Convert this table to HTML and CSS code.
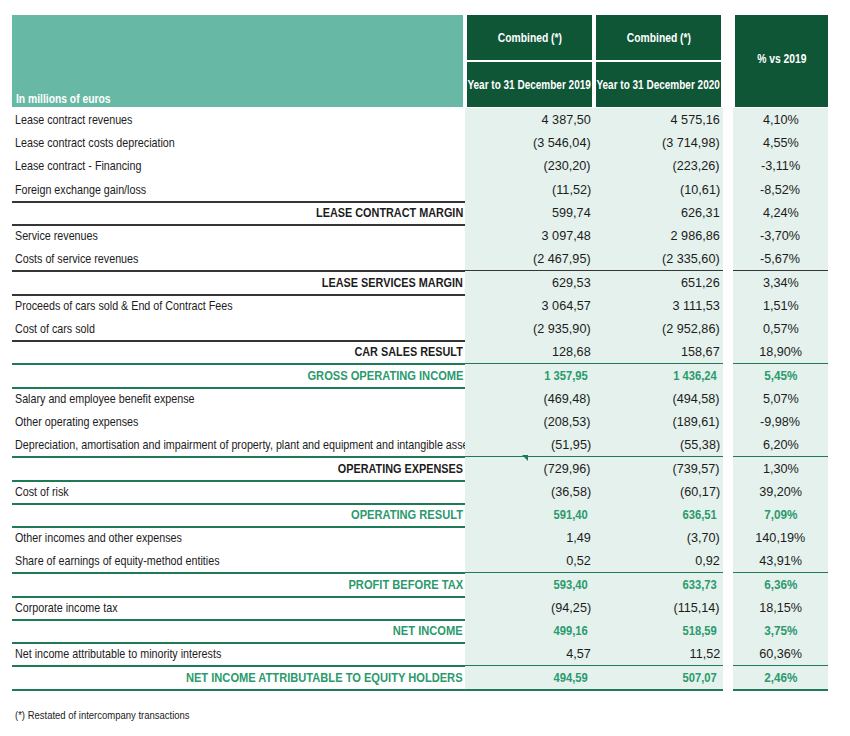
FILE: index.html
```html
<!DOCTYPE html>
<html>
<head>
<meta charset="utf-8">
<link rel="stylesheet" href="styles.css">
</head>
<body>
<div class="page">
  <div class="head">
    <div class="h-label"><span class="t">In millions of euros</span></div>
    <div class="h-cell h-top1"><span class="t">Combined (*)</span></div>
    <div class="h-cell h-top2"><span class="t">Combined (*)</span></div>
    <div class="h-pct"><span class="t">% vs 2019</span></div>
    <div class="h-cell h-bot1"><span class="t">Year to 31 December 2019</span></div>
    <div class="h-cell h-bot2"><span class="t">Year to 31 December 2020</span></div>
  </div>
  <div class="body">
    <div class="row"><div class="lab"><span class="t">Lease contract revenues</span></div><div class="n"><span class="t">4 387,50</span></div><div class="n"><span class="t">4 575,16</span></div><div class="gap"></div><div class="p"><span class="t">4,10%</span></div></div>
    <div class="row"><div class="lab"><span class="t">Lease contract costs depreciation</span></div><div class="n"><span class="t">(3 546,04)</span></div><div class="n"><span class="t">(3 714,98)</span></div><div class="gap"></div><div class="p"><span class="t">4,55%</span></div></div>
    <div class="row"><div class="lab"><span class="t">Lease contract - Financing</span></div><div class="n"><span class="t">(230,20)</span></div><div class="n"><span class="t">(223,26)</span></div><div class="gap"></div><div class="p"><span class="t">-3,11%</span></div></div>
    <div class="row dk"><div class="lab"><span class="t">Foreign exchange gain/loss</span></div><div class="n"><span class="t">(11,52)</span></div><div class="n"><span class="t">(10,61)</span></div><div class="gap"></div><div class="p"><span class="t">-8,52%</span></div></div>
    <div class="row dk sub"><div class="lab"><span class="t">LEASE CONTRACT MARGIN</span></div><div class="n"><span class="t">599,74</span></div><div class="n"><span class="t">626,31</span></div><div class="gap"></div><div class="p"><span class="t">4,24%</span></div></div>
    <div class="row"><div class="lab"><span class="t">Service revenues</span></div><div class="n"><span class="t">3 097,48</span></div><div class="n"><span class="t">2 986,86</span></div><div class="gap"></div><div class="p"><span class="t">-3,70%</span></div></div>
    <div class="row dk"><div class="lab"><span class="t">Costs of service revenues</span></div><div class="n"><span class="t">(2 467,95)</span></div><div class="n"><span class="t">(2 335,60)</span></div><div class="gap"></div><div class="p"><span class="t">-5,67%</span></div></div>
    <div class="row dk sub"><div class="lab"><span class="t">LEASE SERVICES MARGIN</span></div><div class="n"><span class="t">629,53</span></div><div class="n"><span class="t">651,26</span></div><div class="gap"></div><div class="p"><span class="t">3,34%</span></div></div>
    <div class="row"><div class="lab"><span class="t">Proceeds of cars sold &amp; End of Contract Fees</span></div><div class="n"><span class="t">3 064,57</span></div><div class="n"><span class="t">3 111,53</span></div><div class="gap"></div><div class="p"><span class="t">1,51%</span></div></div>
    <div class="row dk"><div class="lab"><span class="t">Cost of cars sold</span></div><div class="n"><span class="t">(2 935,90)</span></div><div class="n"><span class="t">(2 952,86)</span></div><div class="gap"></div><div class="p"><span class="t">0,57%</span></div></div>
    <div class="row gr sub"><div class="lab"><span class="t">CAR SALES RESULT</span></div><div class="n"><span class="t">128,68</span></div><div class="n"><span class="t">158,67</span></div><div class="gap"></div><div class="p"><span class="t">18,90%</span></div></div>
    <div class="row gr tot"><div class="lab"><span class="t">GROSS OPERATING INCOME</span></div><div class="n"><span class="t">1 357,95</span></div><div class="n"><span class="t">1 436,24</span></div><div class="gap"></div><div class="p"><span class="t">5,45%</span></div></div>
    <div class="row"><div class="lab"><span class="t">Salary and employee benefit expense</span></div><div class="n"><span class="t">(469,48)</span></div><div class="n"><span class="t">(494,58)</span></div><div class="gap"></div><div class="p"><span class="t">5,07%</span></div></div>
    <div class="row"><div class="lab"><span class="t">Other operating expenses</span></div><div class="n"><span class="t">(208,53)</span></div><div class="n"><span class="t">(189,61)</span></div><div class="gap"></div><div class="p"><span class="t">-9,98%</span></div></div>
    <div class="row gr"><div class="lab"><span class="t">Depreciation, amortisation and impairment of property, plant and equipment and intangible asse</span></div><div class="n"><span class="t">(51,95)</span></div><div class="n"><span class="t">(55,38)</span></div><div class="gap"></div><div class="p"><span class="t">6,20%</span></div></div>
    <div class="row gr sub"><div class="lab"><span class="t">OPERATING EXPENSES</span></div><div class="n"><span class="t">(729,96)</span><span class="tri"></span></div><div class="n"><span class="t">(739,57)</span></div><div class="gap"></div><div class="p"><span class="t">1,30%</span></div></div>
    <div class="row gr"><div class="lab"><span class="t">Cost of risk</span></div><div class="n"><span class="t">(36,58)</span></div><div class="n"><span class="t">(60,17)</span></div><div class="gap"></div><div class="p"><span class="t">39,20%</span></div></div>
    <div class="row gr tot"><div class="lab"><span class="t">OPERATING RESULT</span></div><div class="n"><span class="t">591,40</span></div><div class="n"><span class="t">636,51</span></div><div class="gap"></div><div class="p"><span class="t">7,09%</span></div></div>
    <div class="row"><div class="lab"><span class="t">Other incomes and other expenses</span></div><div class="n"><span class="t">1,49</span></div><div class="n"><span class="t">(3,70)</span></div><div class="gap"></div><div class="p"><span class="t">140,19%</span></div></div>
    <div class="row gr"><div class="lab"><span class="t">Share of earnings of equity-method entities</span></div><div class="n"><span class="t">0,52</span></div><div class="n"><span class="t">0,92</span></div><div class="gap"></div><div class="p"><span class="t">43,91%</span></div></div>
    <div class="row gr tot"><div class="lab"><span class="t">PROFIT BEFORE TAX</span></div><div class="n"><span class="t">593,40</span></div><div class="n"><span class="t">633,73</span></div><div class="gap"></div><div class="p"><span class="t">6,36%</span></div></div>
    <div class="row gr"><div class="lab"><span class="t">Corporate income tax</span></div><div class="n"><span class="t">(94,25)</span></div><div class="n"><span class="t">(115,14)</span></div><div class="gap"></div><div class="p"><span class="t">18,15%</span></div></div>
    <div class="row gr tot"><div class="lab"><span class="t">NET INCOME</span></div><div class="n"><span class="t">499,16</span></div><div class="n"><span class="t">518,59</span></div><div class="gap"></div><div class="p"><span class="t">3,75%</span></div></div>
    <div class="row gr"><div class="lab"><span class="t">Net income attributable to minority interests</span></div><div class="n"><span class="t">4,57</span></div><div class="n"><span class="t">11,52</span></div><div class="gap"></div><div class="p"><span class="t">60,36%</span></div></div>
    <div class="row gr tot"><div class="lab"><span class="t">NET INCOME ATTRIBUTABLE TO EQUITY HOLDERS</span></div><div class="n"><span class="t">494,59</span></div><div class="n"><span class="t">507,07</span></div><div class="gap"></div><div class="p"><span class="t">2,46%</span></div></div>
  </div>
  <div class="note"><span class="t">(*) Restated of intercompany transactions</span></div>
</div>
</body>
</html>
```

FILE: styles.css
```css
html, body {
  margin: 0;
  padding: 0;
  background: #ffffff;
}

body {
  font-family: "Liberation Sans", Arial, sans-serif;
  color: #1c1c1c;
  font-size: 13px;
}

.t {
  display: inline-block;
  white-space: nowrap;
  transform: scaleX(0.825);
  transform-origin: left center;
}

.page {
  padding: 15px 0 0 12px;
  width: 816px;
}

.head {
  display: grid;
  grid-template-columns: 453px 129px 129px 10px 95px;
  grid-template-rows: 45px 45px;
  row-gap: 2px;
}

.h-label {
  grid-column: 1;
  grid-row: 1 / 3;
  background: #67b9a5;
  margin-right: 2px;
  display: flex;
  align-items: flex-end;
  padding: 0 0 1px 4px;
  color: #ffffff;
  font-weight: bold;
  font-size: 12.5px;
}

.h-cell {
  background: #0f5637;
  color: #ffffff;
  font-weight: bold;
  font-size: 12.5px;
  display: flex;
  align-items: center;
  justify-content: center;
  margin: 0 2px;
  white-space: nowrap;
  overflow: hidden;
}

.h-bot1 .t, .h-bot2 .t {
  transform: scaleX(0.8);
}

.h-cell .t,
.h-pct .t,
.p .t {
  transform-origin: center center;
}

.h-top1, .h-top2 {
  align-items: flex-start;
  padding-top: 16px;
}

.h-top1 { grid-column: 2; grid-row: 1; }
.h-top2 { grid-column: 3; grid-row: 1; }
.h-bot1 { grid-column: 2; grid-row: 2; }
.h-bot2 { grid-column: 3; grid-row: 2; }

.h-pct {
  grid-column: 5;
  grid-row: 1 / 3;
  background: #0f5637;
  color: #ffffff;
  font-weight: bold;
  font-size: 12.5px;
  margin-left: 2px;
  display: flex;
  align-items: flex-start;
  justify-content: center;
  padding-top: 37px;
}

.body {
  margin-top: 1px;
}

.row {
  display: grid;
  grid-template-columns: 453px 129px 129px 10px 95px;
  height: 23.24px;
  line-height: 23px;
}

.row > div {
  box-sizing: border-box;
  white-space: nowrap;
}

.lab {
  padding-left: 3px;
  overflow: hidden;
}

.n {
  background: #e4f1ec;
  text-align: right;
  padding-right: 3px;
  position: relative;
  font-size: 13.3px;
}

.n .t {
  transform: scaleX(0.95);
  transform-origin: right center;
}

.p {
  background: #e4f1ec;
  text-align: center;
  font-size: 13.3px;
}

.p .t {
  transform: scaleX(0.95);
}

.row.dk .lab,
.row.dk .n,
.row.dk .p {
  border-bottom: 2px solid #353535;
}

.row.gr .lab,
.row.gr .n,
.row.gr .p {
  border-bottom: 2px solid #1f7a56;
}

.row.sub .lab,
.row.tot .lab {
  text-align: right;
  font-weight: bold;
  padding-right: 2px;
}

.row.sub .lab .t,
.row.tot .lab .t {
  transform-origin: right center;
}

.row.sub .lab .t {
  transform: scaleX(0.835);
}

.row.tot .lab .t {
  transform: scaleX(0.855);
}

.row.tot > div {
  color: #2b9a6d;
  font-weight: bold;
}

.row.tot .n {
  padding-right: 6px;
}

.row.tot .n .t {
  transform: scaleX(0.84);
}

.row.tot .p .t {
  transform: scaleX(0.88);
}

.tri {
  position: absolute;
  top: -2px;
  left: 57px;
  width: 0;
  height: 0;
  border-top: 6px solid #1f7a56;
  border-left: 6px solid transparent;
}

.note {
  margin-top: 20px;
  padding-left: 3px;
  font-size: 11.5px;
  color: #222;
}
```
